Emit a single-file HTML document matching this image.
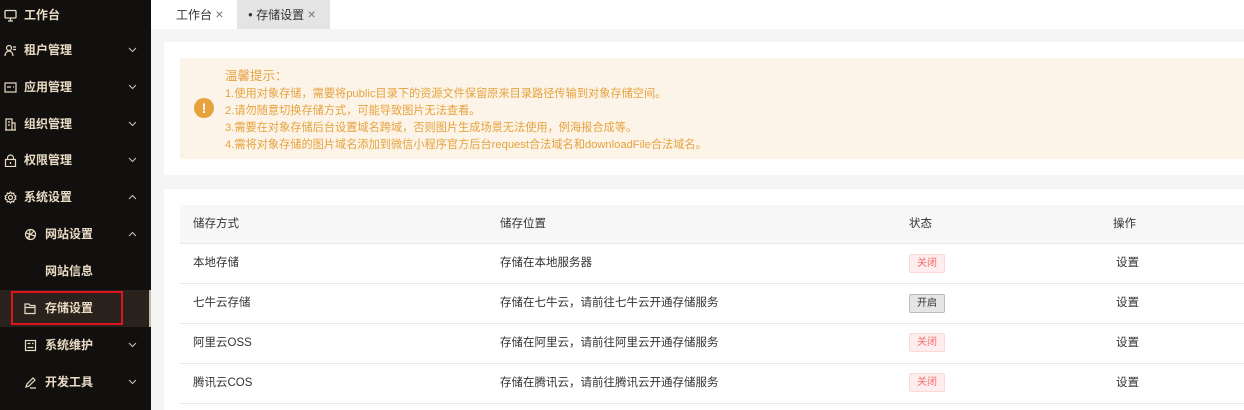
<!DOCTYPE html>
<html><head><meta charset="utf-8"><style>
*{margin:0;padding:0;box-sizing:border-box}
body{width:1244px;height:410px;overflow:hidden;background:#f5f5f5;font-family:"Liberation Sans","Noto Sans CJK SC",sans-serif;font-size:12px;color:#333;position:relative}
.side{position:absolute;left:0;top:0;width:151px;height:410px;background:#11100f;color:#eadbc4;font-size:12px;font-weight:bold}
.mi{position:absolute;left:0;width:151px;height:37px;line-height:37px}
.mi .ic{position:absolute;left:4px;top:12px;width:13px;height:13px}
.mi .t{position:absolute;left:24px}
.mi .ar{position:absolute;left:128px;top:15px;width:9px;height:6px}
.sub .ic{left:24px}.sub .t{left:45px}
.tabs{position:absolute;left:151px;top:0;width:1093px;height:29px;background:#fff}
.tab{position:absolute;top:0;height:29px;line-height:28px;font-size:12px;color:#333}
.x{color:#777;font-size:14px}
.card{position:absolute;background:#fff}
.notice{position:absolute;left:180px;top:58px;width:1064px;height:101px;background:#fcf4e9;color:#e6a23c;font-size:11.2px}
.row{position:absolute;left:180px;width:1064px;height:40px;border-bottom:1px solid #e9e7f3;line-height:39px;font-size:11.5px}
.row span{position:absolute}
.tag{position:absolute;left:909px;top:11px;width:36px;height:19px;line-height:17px;text-align:center;font-size:10px;border:1px solid #fbd9d9;background:#fdeded;color:#f56c6c;border-radius:2px}
.tag.on{background:#e5e5e5;border-color:#bbb;color:#333}
</style></head><body>
<svg width="0" height="0" style="position:absolute"><defs>
<symbol id="dn" viewBox="0 0 9 6"><path d="M1 1l3.5 3.5L8 1" fill="none" stroke="#cdbfa9" stroke-width="1.1"/></symbol>
<symbol id="up" viewBox="0 0 9 6"><path d="M1 5l3.5-3.5L8 5" fill="none" stroke="#cdbfa9" stroke-width="1.1"/></symbol>
</defs></svg>
<div class="side">
 <div class="mi" style="top:-3px"><svg class="ic" viewBox="0 0 13 13" fill="none" stroke="#eadbc4" stroke-width="1.3"><rect x="1" y="1.5" width="11" height="7.5" rx="1"/><path d="M4 12h5M6.5 9v3"/></svg><span class="t">工作台</span></div>
 <div class="mi" style="top:32px"><svg class="ic" viewBox="0 0 13 13" fill="none" stroke="#eadbc4" stroke-width="1.2"><circle cx="5" cy="4" r="2.5"/><path d="M1 12c0-3 2-5 4-5s4 2 4 5M9 3h3M9 5.5h3"/></svg><span class="t">租户管理</span><svg class="ar"><use href="#dn"/></svg></div>
 <div class="mi" style="top:69px"><svg class="ic" viewBox="0 0 13 13" fill="none" stroke="#eadbc4" stroke-width="1.2"><rect x="1" y="2" width="11" height="9"/><path d="M3 6h4M9 6h1"/></svg><span class="t">应用管理</span><svg class="ar"><use href="#dn"/></svg></div>
 <div class="mi" style="top:106px"><svg class="ic" viewBox="0 0 13 13" fill="none" stroke="#eadbc4" stroke-width="1.2"><path d="M2 1h6v11H2zM8 5h3v7H8M1 12h11M4 4h2M4 7h2"/></svg><span class="t">组织管理</span><svg class="ar"><use href="#dn"/></svg></div>
 <div class="mi" style="top:142px"><svg class="ic" viewBox="0 0 13 13" fill="none" stroke="#eadbc4" stroke-width="1.2"><rect x="1.5" y="5.5" width="10" height="7"/><path d="M3.5 5.5V4a3 3 0 016 0v1.5M6.5 8v2"/></svg><span class="t">权限管理</span><svg class="ar"><use href="#dn"/></svg></div>
 <div class="mi" style="top:179px"><svg class="ic" viewBox="0 0 13 13" fill="none" stroke="#eadbc4" stroke-width="1.2"><circle cx="6.5" cy="6.5" r="2"/><path d="M6.5 1l1.2 1.6 2-.5.4 2 1.8 1-.9 1.4.9 1.4-1.8 1-.4 2-2-.5-1.2 1.6-1.2-1.6-2 .5-.4-2-1.8-1 .9-1.4-.9-1.4 1.8-1 .4-2 2 .5z"/></svg><span class="t">系统设置</span><svg class="ar"><use href="#up"/></svg></div>
 <div class="mi sub" style="top:216px"><svg class="ic" viewBox="0 0 13 13" fill="none" stroke="#eadbc4" stroke-width="1.2"><circle cx="6.5" cy="6.5" r="5"/><path d="M2 5l9 3M6 1.5L5 11.5M3 10l7-7"/></svg><span class="t">网站设置</span><svg class="ar"><use href="#up"/></svg></div>
 <div class="mi sub" style="top:253px"><span class="t">网站信息</span></div>
 <div class="mi sub" style="top:290px;background:#2a231d;border-right:2px solid #c8b89e"><svg class="ic" viewBox="0 0 13 13" fill="none" stroke="#eadbc4" stroke-width="1.2"><path d="M1 2h4l1 1.5h5v8H1zM1 5.5h10"/></svg><span class="t">存储设置</span></div>
 <div style="position:absolute;left:11px;top:291px;width:112px;height:34px;border:2px solid #e0141e"></div>
 <div class="mi sub" style="top:327px"><svg class="ic" viewBox="0 0 13 13" fill="none" stroke="#eadbc4" stroke-width="1.2"><rect x="1.5" y="1.5" width="10" height="10"/><path d="M3.5 4.5h3M3.5 8.5h6M8 4.5h1.5"/></svg><span class="t">系统维护</span><svg class="ar"><use href="#dn"/></svg></div>
 <div class="mi sub" style="top:364px"><svg class="ic" viewBox="0 0 13 13" fill="none" stroke="#eadbc4" stroke-width="1.2"><path d="M2 11l1-3 6-6 2 2-6 6zM6 12h6"/></svg><span class="t">开发工具</span><svg class="ar"><use href="#dn"/></svg></div>
</div>
<div class="tabs">
 <div class="tab" style="left:25px">工作台 <span class="x">×</span></div>
 <div class="tab" style="left:86px;width:93px;background:#e4e4e4;padding-left:11px"><span style="font-size:8px;vertical-align:2px">●</span> 存储设置 <span class="x">×</span></div>
</div>
<div class="card" style="left:164px;top:42px;width:1080px;height:133px"></div>
<div class="notice">
 <div style="position:absolute;left:45px;top:7px;font-size:12.5px">温馨提示：</div>
 <div style="position:absolute;left:14px;top:40px;width:20px;height:20px;border-radius:50%;background:#e6a23c;color:#fff;font-weight:bold;text-align:center;line-height:20px;font-size:14px">!</div>
 <div style="position:absolute;left:45px;top:28px;line-height:17px">1.使用对象存储，需要将public目录下的资源文件保留原来目录路径传输到对象存储空间。<br>2.请勿随意切换存储方式，可能导致图片无法查看。<br>3.需要在对象存储后台设置域名跨域，否则图片生成场景无法使用，例海报合成等。<br>4.需将对象存储的图片域名添加到微信小程序官方后台request合法域名和downloadFile合法域名。</div>
</div>
<div class="card" style="left:164px;top:189px;width:1080px;height:221px"></div>
<div class="row" style="top:205px;height:39px;background:#f7f7f7;line-height:38px"><span style="left:13px">储存方式</span><span style="left:320px">储存位置</span><span style="left:729px">状态</span><span style="left:933px">操作</span></div>
<div class="row" style="top:244px"><span style="left:13px">本地存储</span><span style="left:320px">存储在本地服务器</span><span style="left:936px">设置</span></div><div class="tag" style="top:254px">关闭</div>
<div class="row" style="top:284px"><span style="left:13px">七牛云存储</span><span style="left:320px">存储在七牛云，请前往七牛云开通存储服务</span><span style="left:936px">设置</span></div><div class="tag on" style="top:294px">开启</div>
<div class="row" style="top:324px"><span style="left:13px">阿里云OSS</span><span style="left:320px">存储在阿里云，请前往阿里云开通存储服务</span><span style="left:936px">设置</span></div><div class="tag" style="top:333px">关闭</div>
<div class="row" style="top:364px"><span style="left:13px">腾讯云COS</span><span style="left:320px">存储在腾讯云，请前往腾讯云开通存储服务</span><span style="left:936px">设置</span></div><div class="tag" style="top:373px">关闭</div>
</body></html>
